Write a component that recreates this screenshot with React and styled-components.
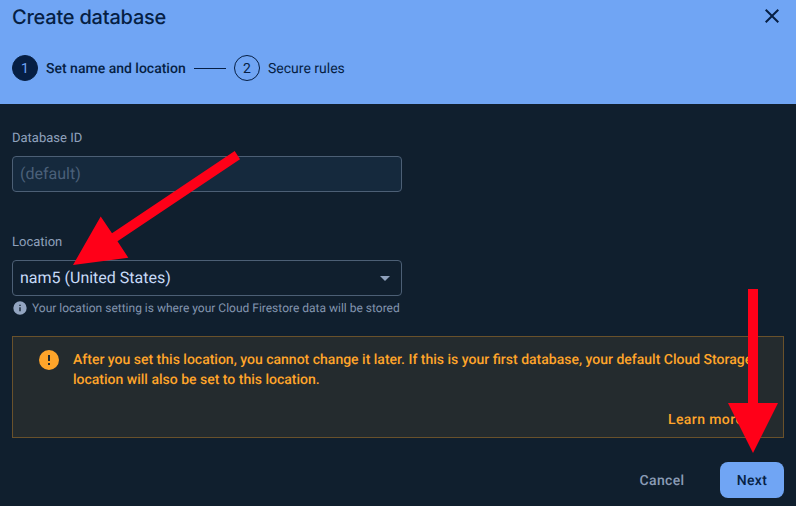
import React from "react";
import styled, { createGlobalStyle } from "styled-components";

const GlobalStyle = createGlobalStyle`
  *, *::before, *::after { box-sizing: border-box; }
  html, body { margin: 0; background: #101f2e; overflow: hidden; }
  body { font-family: Roboto, "Liberation Sans", sans-serif; text-rendering: geometricPrecision; }
`;

const Dialog = styled.main`
  position: relative;
  width: 796px;
  height: 506px;
  display: flex;
  flex-direction: column;
  overflow: hidden;
  background: #101f2e;
`;

const Header = styled.header`
  height: 104px;
  flex: none;
  padding: 4px 12px 0;
  background: #70a5f4;
  color: #061f44;
`;

const TitleRow = styled.div`
  height: 26px;
  display: flex;
  align-items: flex-start;
  justify-content: space-between;
`;

const Title = styled.h1`
  margin: 0;
  font-family: Inter, Roboto, sans-serif;
  font-size: 20px;
  line-height: 26px;
  font-weight: 450;
  letter-spacing: -0.22px;
`;

const CloseButton = styled.button`
  width: 24px;
  height: 24px;
  padding: 0;
  border: 0;
  background: none;
  color: inherit;
  svg { display: block; }
`;

const Stepper = styled.div`
  display: flex;
  align-items: center;
  gap: 8px;
  height: 26px;
  margin-top: 25px;
`;

const StepNumber = styled.span`
  width: 26px;
  height: 26px;
  flex: none;
  display: flex;
  align-items: center;
  justify-content: center;
  padding-top: 2px;
  border: 1px solid #061f44;
  border-radius: 50%;
  font-size: 14px;
  line-height: 20px;
  background: ${(p) => (p.$active ? "#061f44" : "transparent")};
  color: ${(p) => (p.$active ? "#70a5f4" : "#061f44")};
`;

const StepLabel = styled.span`
  width: ${(p) => p.$width}px;
  padding-top: 2px;
  white-space: nowrap;
  font-size: 14px;
  line-height: 20px;
  font-weight: ${(p) => (p.$active ? 500 : 400)};
`;

const StepLine = styled.span`
  width: 32px;
  height: 1px;
  background: #061f44;
`;

const Body = styled.section`
  padding: 26px 12px 0;
`;

const Field = styled.div`
  width: 390px;
  margin-bottom: ${(p) => p.$gap || 0}px;
`;

const Label = styled.label`
  display: block;
  height: 26px;
  padding-top: 1px;
  color: #8fa1bc;
  font-size: 13px;
  line-height: 16px;
`;

const Control = styled.div`
  height: 36px;
  display: flex;
  align-items: center;
  justify-content: space-between;
  padding: 0 11px 0 7px;
  border: 1px solid #4c5f75;
  border-radius: 4px;
  background: ${(p) => (p.$filled ? "#15293d" : "transparent")};
  color: ${(p) => (p.$filled ? "#4b6079" : "#c7daf7")};
  font-size: 16px;
  line-height: 20px;
  white-space: nowrap;
`;

const Hint = styled.div`
  display: flex;
  align-items: center;
  gap: 4px;
  height: 16px;
  margin-top: 4px;
  color: #8395af;
  font-size: 12px;
  line-height: 16px;
  white-space: nowrap;
  svg { flex: none; }
`;

const Warning = styled.div`
  height: 102px;
  margin-top: 20px;
  padding: 13px 22px 0 24px;
  border: 1px solid #69512b;
  background: #242b2e;
  color: #ffa52a;
  display: grid;
  grid-template-columns: 36px 1fr;
  grid-template-rows: 60px 20px;
`;

const WarningIcon = styled.svg`
  margin-top: -2px;
`;

const WarningText = styled.p`
  margin: 0;
  font-size: 14px;
  line-height: 20px;
  font-weight: 500;
  white-space: nowrap;
`;

const LearnMore = styled.a`
  grid-column: 2;
  width: 93px;
  justify-self: end;
  font-size: 14px;
  line-height: 20px;
  font-weight: 500;
  letter-spacing: 0.4px;
  white-space: nowrap;
`;

const Actions = styled.footer`
  display: flex;
  justify-content: flex-end;
  gap: 16px;
  margin-top: 24px;
`;

const Button = styled.button`
  height: 36px;
  width: ${(p) => (p.$primary ? 64 : 84)}px;
  padding: 2px 0 0;
  border: 0;
  border-radius: 8px;
  background: ${(p) => (p.$primary ? "#70a5f4" : "transparent")};
  color: ${(p) => (p.$primary ? "#061f44" : "#8b9cb6")};
  font: 500 14px/20px Roboto, sans-serif;
  letter-spacing: 0.35px;
  text-rendering: geometricPrecision;
`;

const Annotations = styled.svg`
  position: absolute;
  inset: 0;
  pointer-events: none;
`;

export default function App() {
  return (
    <>
      <GlobalStyle />
      <Dialog>
        <Header>
          <TitleRow>
            <Title>Create database</Title>
            <CloseButton aria-label="Close">
              <svg width="24" height="24" viewBox="0 0 24 24" fill="currentColor">
                <path d="M19 6.41 17.59 5 12 10.59 6.41 5 5 6.41 10.59 12 5 17.59 6.41 19 12 13.41 17.59 19 19 17.59 13.41 12z" />
              </svg>
            </CloseButton>
          </TitleRow>
          <Stepper>
            <StepNumber $active>1</StepNumber>
            <StepLabel $active $width={140}>Set name and location</StepLabel>
            <StepLine />
            <StepNumber>2</StepNumber>
            <StepLabel $width={78}>Secure rules</StepLabel>
          </Stepper>
        </Header>
        <Body>
          <Field $gap={42}>
            <Label>Database ID</Label>
            <Control $filled><span>(default)</span></Control>
          </Field>
          <Field>
            <Label>Location</Label>
            <Control>
              <span>nam5 (United States)</span>
              <svg width="10" height="5" viewBox="0 0 10 5"><path d="M0 0h10L5 5z" fill="#8fa1bc" /></svg>
            </Control>
            <Hint>
              <svg width="16" height="16" viewBox="0 0 24 24" fill="#93a5c1">
                <path d="M12 2a10 10 0 1 0 0 20 10 10 0 0 0 0-20zm1 15h-2v-6h2v6zm0-8h-2V7h2v2z" />
              </svg>
              Your location setting is where your Cloud Firestore data will be stored
            </Hint>
          </Field>
          <Warning>
            <WarningIcon width="24" height="24" viewBox="0 0 24 24" fill="currentColor">
              <path d="M12 2a10 10 0 1 0 0 20 10 10 0 0 0 0-20zm1 15h-2v-2h2v2zm0-4h-2V7h2v6z" />
            </WarningIcon>
            <WarningText>
              After you set this location, you cannot change it later. If this is your first database, your default Cloud Storage
              <br />
              location will also be set to this location.
            </WarningText>
            <LearnMore>Learn more</LearnMore>
          </Warning>
          <Actions>
            <Button>Cancel</Button>
            <Button $primary>Next</Button>
          </Actions>
        </Body>
        <Annotations width="796" height="506" viewBox="0 0 796 506" fill="#ff0018">
          <path d="M234.7 151 240 159.3 117.5 241.3 128.3 257.7 73 265 100.7 216.5 112 233.3z" />
          <path d="M748 289h10v114h20l-25 50-25-50h20z" />
        </Annotations>
      </Dialog>
    </>
  );
}
